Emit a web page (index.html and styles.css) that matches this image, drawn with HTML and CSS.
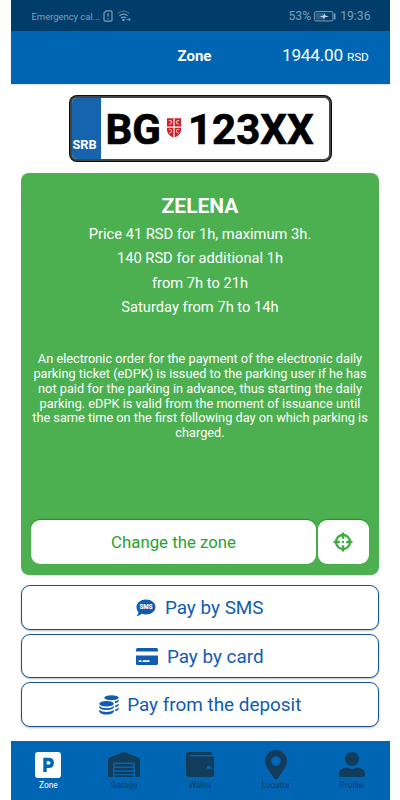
FILE: index.html
```html
<!DOCTYPE html>
<html lang="en">
<head>
  <meta charset="UTF-8">
  <meta name="viewport" content="width=device-width, initial-scale=1.0">
  <title>Parking – Zone</title>
  <link rel="stylesheet" href="styles.css">
</head>
<body>
  <div class="app">

    <div class="status-bar">
      <span class="carrier">Emergency cal...</span>
      <svg class="sim-icon" width="10" height="12" viewBox="0 0 10 12" fill="none" stroke="currentColor" stroke-width="1.2">
        <path d="M3.3 .8h4.4Q9 .8 9 2v8q0 1.200-1.200 1.200H2.200Q1 11.200 1 10V3z"/>
        <path d="M5 3.200v3.600M5 8v1.300"/>
      </svg>
      <svg class="wifi-icon" width="14" height="12" viewBox="0 0 14 12" fill="none" stroke="currentColor" stroke-width="1.2">
        <path d="M.7 3.500Q6.500-1.200 12.300 3.500" opacity=".5"/>
        <path d="M2.500 5.800Q6.500 2.500 10.500 5.800M4.200 8Q6.500 6.200 8.800 8"/>
        <circle cx="6.500" cy="10" r=".6" fill="currentColor"/>
        <path d="M9.500 9.500h3.500M11.700 8l1.500 1.500-1.500 1.500" stroke-width=".9"/>
      </svg>
      <span class="battery-text">53%</span>
      <svg class="battery-icon" width="22" height="11" viewBox="0 0 22 11">
        <rect x=".6" y=".6" width="18.300" height="9.300" rx="1" fill="none" stroke="currentColor"/>
        <rect x="2" y="2" width="9" height="6.500" fill="currentColor" opacity=".35"/>
        <path d="M5.500 5.500l4-1 1-2 1 2 3.500 1-4 .8-1 2-1-2z" fill="#c4d6e4"/>
        <path d="M20 2.500h1.500v6H20z" fill="currentColor"/>
      </svg>
      <span class="clock">19:36</span>
    </div>

    <header>
      <h1>Zone</h1>
      <div class="balance">1944.00 <small>RSD</small></div>
    </header>

    <main>
      <div class="plate">
        <div class="plate-country">SRB</div>
        <div class="plate-number">
          <span class="plate-city">BG</span>
          <svg class="crest" width="14" height="20" viewBox="0 0 15 21">
            <path d="M0 0h15v13q0 5-7.500 8Q0 18 0 13z" fill="#d32027"/>
            <path d="M7.500 0v21M0 9.500h15" stroke="#fff" stroke-width="1.300"/>
            <path d="M2 2.500q3-.5 3 1.500T2.500 6.500M13 2.500q-3-.5-3 1.500t2.500 2.500M2 12q3-.5 3 1.500T2.500 16M13 12q-3-.5-3 1.500t2.500 2.500" fill="none" stroke="#fff" stroke-width=".9"/>
          </svg>
          <span class="plate-code">123XX</span>
        </div>
      </div>

      <section class="zone-card">
        <h2>ZELENA</h2>
        <div class="prices">
          <p>Price 41 RSD for 1h, maximum 3h.</p>
          <p>140 RSD for additional 1h</p>
          <p>from 7h to 21h</p>
          <p>Saturday from 7h to 14h</p>
        </div>
        <p class="note">
          An electronic order for the payment of the electronic daily<br>
          parking ticket (eDPK) is issued to the parking user if he has<br>
          not paid for the parking in advance, thus starting the daily<br>
          parking. eDPK is valid from the moment of issuance until<br>
          the same time on the first following day on which parking is<br>
          charged.
        </p>
        <div class="zone-actions">
          <button class="change-zone">Change the zone</button>
          <button class="locate" aria-label="Locate me">
            <svg width="20" height="20" viewBox="0 0 20 20" fill="none" stroke="currentColor">
              <circle cx="10" cy="10" r="7" stroke-width="2.300"/>
              <path d="M10 .6v6.200M10 13.200v6.200M.6 10h6.200M13.200 10h6.200" stroke-width="2.300"/>
              <circle cx="10" cy="10" r="1.200" fill="currentColor" stroke="none"/>
            </svg>
          </button>
        </div>
      </section>

      <div class="payments">
        <button class="pay">
          <svg width="20" height="18" viewBox="0 0 20 18">
            <path d="M10 .5c5.200 0 9.500 3.200 9.500 7.500s-4.300 7.500-9.500 7.500c-1.500 0-2.900-.2-4.100-.7C4.500 16 2.500 17 .6 17c1.100-1.200 1.800-2.600 1.900-4C1.200 11.600.5 10 .5 8 .5 3.700 4.800.5 10 .5z" fill="currentColor"/>
            <text x="10" y="10.400" textLength="13" lengthAdjust="spacingAndGlyphs" class="sms-label">SMS</text>
          </svg>
          Pay by SMS
        </button>
        <button class="pay">
          <svg width="22" height="17" viewBox="0 0 22 17" fill="currentColor">
            <path d="M1.500 0h19Q22 0 22 1.500V3.500H0V1.500Q0 0 1.500 0z"/>
            <path d="M0 7.500h22v8q0 1.500-1.500 1.500h-19Q0 17 0 15.500z"/>
            <path d="M2.700 12.300h2.800v1.700H2.700zM6.700 12.300h6.800v1.700H6.700z" fill="#fff"/>
          </svg>
          Pay by card
        </button>
        <button class="pay">
          <svg width="20" height="20" viewBox="0 0 20 20" fill="currentColor">
            <ellipse cx="12.500" cy="2.800" rx="7.200" ry="2.500"/>
            <ellipse cx="7.500" cy="8.800" rx="7.300" ry="2.800"/>
            <path d="M.2 11q2.500 2.300 7.300 2.300t7.300-2.300v1.500q-1.500 2.500-7.300 2.500T.2 12.500zM.2 15q2.500 2 7.300 2t7.300-2v1.700q-1.500 2.800-7.300 2.800T.2 16.700z"/>
            <path d="M15.500 6.500q2.700-.5 4.200-1.800v1.500q-.8 1.500-3.500 2.100zM16.200 10.500q2-.5 3.500-1.700v1.500q-.8 1.500-3.500 2.100zM16.200 14.500q2-.5 3.500-1.700v1.400q-.8 1.500-3.500 2.100z"/>
          </svg>
          Pay from the deposit
        </button>
      </div>
    </main>

    <nav>
      <a class="active">
        <svg width="26" height="28" viewBox="0 0 26 28">
          <rect y="1" width="26" height="26" rx="3" fill="#fff"/>
          <path d="M10 21V8.500h3.700q3.500 0 3.500 3.400t-3.500 3.400H10" fill="none" stroke="#0066b3" stroke-width="3.400"/>
        </svg>
        Zone
      </a>
      <a>
        <svg width="32" height="28" viewBox="0 0 32 28" fill="currentColor">
          <path d="M0 26V8.500Q0 7.300 1.200 6.800L15 1.300q1-.4 2 0l13.800 5.500Q32 7.300 32 8.500V26h-5V13q0-1.500-1.500-1.500h-19Q5 11.500 5 13v13z"/>
          <path d="M6.500 13h19v2.500h-19zM6.500 17h19v2.300h-19zM6.500 20.800h19V23h-19zM6.500 24.200h19V26h-19z"/>
        </svg>
        Garage
      </a>
      <a>
        <svg width="28" height="28" viewBox="0 0 28 28" fill="currentColor">
          <path d="M3 1h21.500Q26 1 26 2.500V4H4.500q-.8 0-.8.800t.8.800H26q2 0 2 2V24q0 2-2 2H3q-3 0-3-3V4q0-3 3-3z"/>
          <circle cx="22.700" cy="16.300" r="1.900" fill="#0066b3"/>
        </svg>
        Wallet
      </a>
      <a>
        <svg width="22" height="30" viewBox="0 0 22 30">
          <path d="M11 0a11 11 0 0 1 11 11c0 6-7.500 14.800-9.600 17.900q-1.400 1.400-2.800 0C7.500 25.800 0 17 0 11A11 11 0 0 1 11 0zM11 6.300a4.800 4.800 0 1 0 0 9.600 4.800 4.800 0 0 0 0-9.600z" fill="currentColor" fill-rule="evenodd"/>
        </svg>
        Locator
      </a>
      <a>
        <svg width="26" height="28" viewBox="0 0 26 28" fill="currentColor">
          <circle cx="13" cy="8" r="7"/>
          <path d="M7.500 16.800q5.500 2.200 11 0 7.500 0 7.500 7V24q0 2-2 2H2q-2 0-2-2v-.2q0-7 7.500-7z"/>
        </svg>
        Profile
      </a>
    </nav>

  </div>
</body>
</html>
```

FILE: styles.css
```css
* {
  box-sizing: border-box;
}
body {
  margin: 0;
  background: #fff;
  font-family: Roboto, sans-serif;
}
h1, h2, p {
  margin: 0;
}
svg {
  display: block;
  flex: none;
}
.app {
  display: flex;
  flex-direction: column;
  width: 379px;
  height: 800px;
  margin: 0 auto;
}
.status-bar {
  display: flex;
  align-items: center;
  height: 31px;
  padding: 1px 19px 0 21px;
  background: #003d6b;
  color: #7d9fba;
}
.carrier {
  width: 68px;
  font-size: 9.6px;
  letter-spacing: -0.1px;
  white-space: nowrap;
}
.sim-icon {
  margin-left: 3.5px;
}
.wifi-icon {
  margin-left: 4px;
}
.battery-text {
  margin-left: auto;
  font-size: 12.2px;
}
.battery-icon {
  margin: 0 4px 0 3px;
}
.clock {
  font-size: 12.2px;
}
header {
  display: grid;
  grid-template-columns: 1fr auto 1fr;
  align-items: center;
  height: 53px;
  padding: 0 21px;
  background: #0066b3;
  color: #fff;
  box-shadow: 0 1px 2px rgba(0,0,0,0.15);
}
h1 {
  grid-column: 2;
  padding: 0 11px 4px 0;
  font-size: 15px;
  font-weight: 700;
  line-height: 18px;
}
.balance {
  padding-bottom: 4px;
  font-size: 17.2px;
  line-height: 20px;
  letter-spacing: -0.2px;
  text-align: right;
  white-space: nowrap;
}
.balance small {
  font-size: 11.8px;
}
main {
  flex: 1;
  padding: 12px 10.5px 0;
}
.plate {
  display: flex;
  width: 261px;
  height: 65px;
  margin: 0 auto;
  border: 2px solid #444;
  border-radius: 7px;
  overflow: hidden;
  background: #fff;
  box-shadow: 0 0 0 1px #0c0c0c;
}
.plate-country {
  display: flex;
  align-items: flex-end;
  justify-content: center;
  width: 29px;
  padding: 0 3px 7px 0;
  background: #1664ad;
  color: #fff;
  font-size: 12.8px;
  font-weight: 700;
  line-height: 14px;
}
.plate-number {
  display: flex;
  align-items: center;
  padding: 2px 0 0 5px;
  color: #000;
  font-size: 42px;
  font-weight: 700;
  -webkit-text-stroke: 0.7px #000;
}
.crest {
  margin: -3px 7px 0 6px;
}
.zone-card {
  display: flex;
  flex-direction: column;
  height: 402px;
  margin-top: 12px;
  padding: 21px 10px 11px;
  border-radius: 8px;
  background: #4caf50;
  color: #fff;
  text-align: center;
}
h2 {
  font-size: 21px;
  font-weight: 700;
  line-height: 24px;
}
.prices {
  margin-top: 4px;
  font-size: 14.7px;
  line-height: 24.3px;
}
.note {
  margin: 33px -5px 0;
  font-size: 12.75px;
  line-height: 14.8px;
  white-space: nowrap;
}
.zone-actions {
  display: flex;
  gap: 2px;
  margin-top: auto;
}
button {
  padding: 0;
  font-family: inherit;
  cursor: pointer;
}
.change-zone, .locate {
  height: 44px;
  border: none;
  border-radius: 9px;
  background: #fff;
  color: #27a22d;
  box-shadow: 0 -0.5px 1px rgba(16,150,20,0.9);
}
.change-zone {
  flex: 1;
  font-size: 16.8px;
}
.locate {
  display: flex;
  align-items: center;
  justify-content: center;
  width: 51px;
  padding-right: 1px;
  color: #3fab44;
}
.payments {
  display: flex;
  flex-direction: column;
  gap: 4px;
  margin-top: 10px;
}
.pay {
  display: flex;
  align-items: center;
  justify-content: center;
  gap: 8.5px;
  height: 44.5px;
  padding-top: 1px;
  border: 1px solid #1450a0;
  border-radius: 9px;
  background: #fff;
  color: #0f5cb0;
  font-size: 18.9px;
  box-shadow: 0 1px 2px rgba(0,0,0,0.25);
}
.sms-label {
  fill: #fff;
  font-size: 6.8px;
  font-weight: 900;
  text-anchor: middle;
}
nav {
  display: flex;
  height: 59px;
  padding-top: 9px;
  background: #0066b3;
}
nav a {
  display: flex;
  flex: 1;
  flex-direction: column;
  align-items: center;
  color: #123c5c;
  font-size: 8.4px;
  line-height: 11px;
}
nav svg {
  height: 30px;
}
nav a.active {
  color: #fff;
}
```
